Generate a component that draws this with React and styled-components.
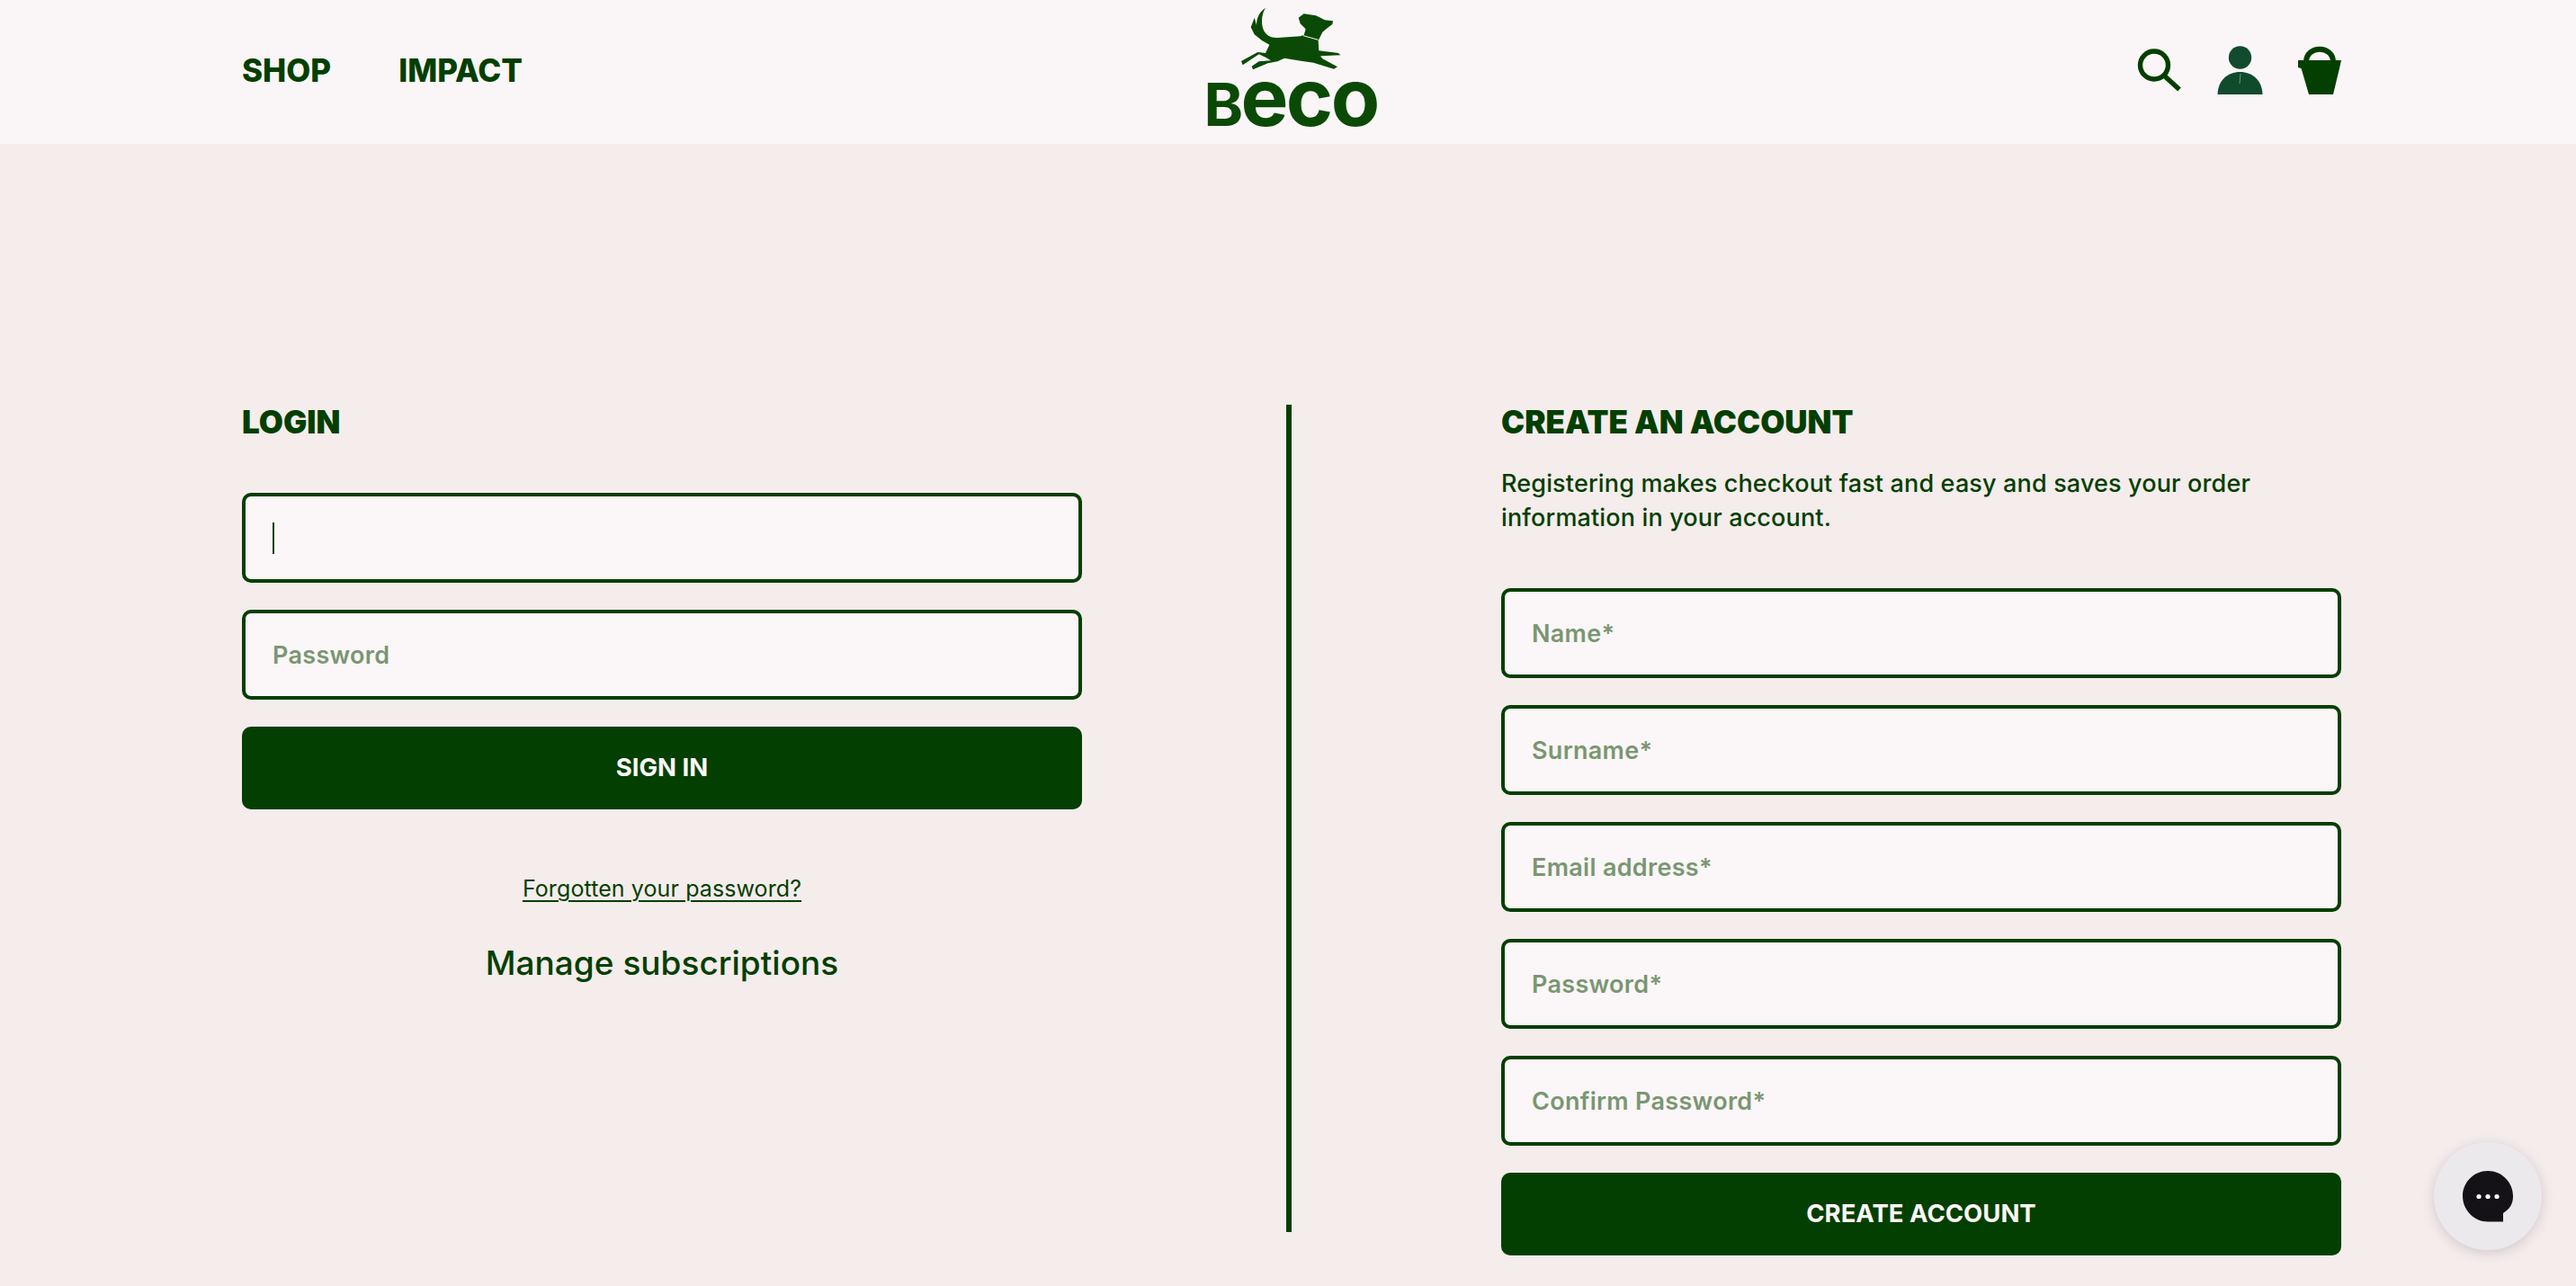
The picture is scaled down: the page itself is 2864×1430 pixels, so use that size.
import React from "react";
import styled, { createGlobalStyle } from "styled-components";

const green = "#033f00";

const GlobalStyle = createGlobalStyle`
  html, body {
    margin: 0;
    padding: 0;
    background: #f5ecec;
  }
  * {
    box-sizing: border-box;
  }
`;

const Page = styled.div`
  width: 2864px;
  height: 1430px;
  position: relative;
  overflow: hidden;
  background: #f5ecec;
  color: ${green};
  font-family: "Inter", "Lato", sans-serif;
`;

const Header = styled.header`
  height: 160px;
  background: #faf5f6;
  padding: 0 261px 4px 269px;
  display: grid;
  grid-template-columns: 1fr auto 1fr;
  align-items: center;
`;

const Nav = styled.nav`
  display: flex;
  gap: 75px;
`;

const NavLink = styled.a`
  font-size: 35px;
  font-weight: 800;
  color: ${green};
  line-height: 44px;
`;

const Logo = styled.div`
  display: flex;
  flex-direction: column;
  align-items: center;
  margin: 0 2px 12px 0;
  line-height: 1;
`;

const LogoWord = styled.div`
  font-weight: 700;
  font-size: 89px;
  line-height: 58px;
  height: 58px;
  letter-spacing: -2.6px;
  color: #0b4a06;
`;

const LogoB = styled.span`
  font-size: 66px;
`;

const Icons = styled.div`
  display: flex;
  justify-content: flex-end;
  align-items: center;
  gap: 39px;
`;

const Main = styled.main`
  padding: 289px 261px 0 269px;
  display: grid;
  grid-template-columns: 934px 466px 934px;
`;

const Column = styled.section`
  display: flex;
  flex-direction: column;
`;

const Divider = styled.div`
  width: 6px;
  height: 920px;
  margin: 1px 6px 0 0;
  background: ${green};
  justify-self: center;
`;

const Heading = styled.h2`
  margin: -2px 0 0;
  font-size: 35px;
  line-height: 44px;
  font-weight: 900;
  color: ${green};
`;

const Intro = styled.p`
  margin: 28px 0 59px;
  font-size: 27px;
  line-height: 38px;
  font-weight: 500;
  letter-spacing: 0.15px;
  color: ${green};
`;

const Form = styled.form`
  display: flex;
  flex-direction: column;
  gap: 30px;
  margin-top: ${(p) => p.$top || 0}px;
`;

const Field = styled.div`
  height: 100px;
  display: flex;
  align-items: center;
  padding: 0 30px;
  background: #fbf6f7;
  border: 4px solid ${green};
  border-radius: 10px;
`;

const Placeholder = styled.span`
  font-size: 27px;
  font-weight: 600;
  letter-spacing: 0.3px;
  color: #7a9673;
`;

const Caret = styled.span`
  width: 2px;
  height: 35px;
  background: ${green};
`;

const Submit = styled.button`
  height: 92px;
  padding: 0 0 2px;
  border: 0;
  border-radius: 10px;
  background: ${green};
  color: #fbf6f6;
  font-family: inherit;
  font-size: 27.5px;
  font-weight: 700;
`;

const Forgot = styled.a`
  align-self: center;
  margin-top: 72px;
  font-size: 25px;
  line-height: 32px;
  font-weight: 400;
  letter-spacing: 0.1px;
  color: ${green};
  text-decoration: underline;
  text-underline-offset: 4px;
  text-decoration-thickness: 2px;
`;

const Manage = styled.a`
  align-self: center;
  margin-top: 45px;
  font-size: 37px;
  line-height: 44px;
  font-weight: 500;
  color: ${green};
`;

const Chat = styled.div`
  position: absolute;
  left: 2706px;
  top: 1270px;
  width: 120px;
  height: 120px;
  border-radius: 50%;
  background: #ebe9ec;
  box-shadow: 0 3px 14px rgba(60, 40, 60, 0.18);
  display: flex;
  align-items: center;
  justify-content: center;
`;

const DogLogo = () => (
  <svg width="112" height="72" viewBox="238 22 336 216" aria-hidden="true">
    <path
      fill="#0b4a06"
      d="M322 27C310 45 306 75 315 100C322 118 340 128 362 127L438 122L450 118L456 98L438 80L432 60L450 47L490 53L520 68L547 71L545 82L528 95L512 108L498 137L500 170L565 178L572 185L505 188L512 197L562 224L550 231L482 210L440 204L385 195L362 206L330 212L280 233L276 222L300 206L340 203L322 192L300 182L246 218L241 205L296 175L322 178L335 150L310 136L285 116L273 92L285 60L292 85C292 60 302 40 322 27Z"
    />
    <path fill="none" stroke="#fbf6f6" strokeWidth="3" d="M448 120L498 134" />
  </svg>
);

const SearchIcon = () => (
  <svg width="50" height="50" viewBox="0 0 50 50" aria-hidden="true">
    <circle cx="19" cy="19.5" r="15.5" fill="none" stroke={green} strokeWidth="5.4" />
    <path d="M30 31L47 46.5" fill="none" stroke={green} strokeWidth="5.4" />
  </svg>
);

const UserIcon = () => (
  <svg width="51" height="54" viewBox="0 0 51 54" aria-hidden="true">
    <circle cx="25.5" cy="13" r="12.7" fill="#114b2e" />
    <path d="M0.5 54C1 38 12 29 25.5 29C39 29 50 38 50.5 54Z" fill="#114b2e" />
    <path d="M26 31L25 42" stroke="#6f9280" strokeWidth="1" fill="none" />
  </svg>
);

const BagIcon = () => (
  <svg width="48" height="54" viewBox="0 0 48 54" aria-hidden="true">
    <path d="M9 18C9 -1 39 -1 39 18" fill="none" stroke={green} strokeWidth="6" />
    <path d="M0 16H48L46 25L39 54H12L3.5 25L0 24Z" fill={green} />
  </svg>
);

const ChatIcon = () => (
  <svg width="56" height="57" viewBox="0 0 56 57" aria-hidden="true">
    <path d="M28 0C43.5 0 56 12.5 56 28C56 36 53 42 45 47V56.5H28C12.5 56.5 0 43.5 0 28C0 12.5 12.5 0 28 0Z" fill="#141216" />
    <circle cx="18" cy="28.5" r="2.6" fill="#fff" />
    <circle cx="28" cy="28.5" r="2.6" fill="#fff" />
    <circle cx="38" cy="28.5" r="2.6" fill="#fff" />
  </svg>
);

const accountFields = ["Name*", "Surname*", "Email address*", "Password*", "Confirm Password*"];

const App = () => {
  return (
    <Page>
      <GlobalStyle />
      <Header>
        <Nav>
          <NavLink>SHOP</NavLink>
          <NavLink>IMPACT</NavLink>
        </Nav>
        <Logo>
          <DogLogo />
          <LogoWord>
            <LogoB>B</LogoB>eco
          </LogoWord>
        </Logo>
        <Icons>
          <SearchIcon />
          <UserIcon />
          <BagIcon />
        </Icons>
      </Header>

      <Main>
        <Column>
          <Heading>LOGIN</Heading>
          <Form $top={57}>
            <Field>
              <Caret />
            </Field>
            <Field>
              <Placeholder>Password</Placeholder>
            </Field>
            <Submit type="button">SIGN IN</Submit>
          </Form>
          <Forgot>Forgotten your password?</Forgot>
          <Manage>Manage subscriptions</Manage>
        </Column>

        <Divider />

        <Column>
          <Heading>CREATE AN ACCOUNT</Heading>
          <Intro>
            Registering makes checkout fast and easy and saves your order
            <br />
            information in your account.
          </Intro>
          <Form>
            {accountFields.map((label) => (
              <Field key={label}>
                <Placeholder>{label}</Placeholder>
              </Field>
            ))}
            <Submit type="button">CREATE ACCOUNT</Submit>
          </Form>
        </Column>
      </Main>

      <Chat>
        <ChatIcon />
      </Chat>
    </Page>
  );
};

export default App;
